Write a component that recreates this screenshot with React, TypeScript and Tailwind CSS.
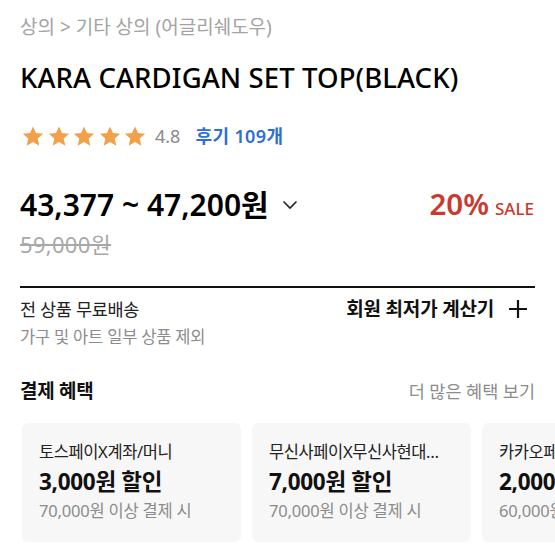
import React from "react";

const Star = () => (
  <svg width="24" height="23" viewBox="0 0 24 24">
    <path
      d="M12 1.5l3.1 6.9 7.5.7-5.7 5.1 1.7 7.5L12 17.8l-6.6 3.9 1.7-7.5-5.7-5.1 7.5-.7z"
      fill="#f3a04a"
    />
  </svg>
);

const cards = [
  { t: "토스페이X계좌/머니", a: "3,000원 할인", c: "70,000원 이상 결제 시" },
  { t: "무신사페이X무신사현대…", a: "7,000원 할인", c: "70,000원 이상 결제 시" },
  { t: "카카오페이X카드", a: "2,000원 할인", c: "60,000원 이상 결제 시" },
];

export default function App() {
  return (
    <div className="w-[555px] h-[555px] overflow-hidden bg-white font-['Noto_Sans','Noto_Sans_CJK_KR',sans-serif]">
      <div className="px-5">
        <div className="pt-[15px] text-[19px] leading-[24px] text-[#a3a3a3] tracking-[0px]">
          상의 &gt; 기타 상의 (어글리쉐도우)
        </div>
        <h1 className="mt-[22px] text-[27.5px] leading-[34px] font-medium text-black tracking-[0.1px]">
          KARA CARDIGAN SET TOP(BLACK)
        </h1>
        <div className="mt-[29px] flex h-[24px] items-center">
          <div className="flex gap-[1.5px] ml-[1px]">
            <Star />
            <Star />
            <Star />
            <Star />
            <Star />
          </div>
          <span className="ml-[8px] text-[18px] text-[#8a8a8a]">4.8</span>
          <span className="ml-[15px] text-[18px] font-semibold text-[#2d6fd2] tracking-[0.4px]">후기 109개</span>
        </div>
        <div className="mt-[37px] flex h-[38px] items-center justify-between">
          <div className="flex items-center">
            <span className="text-[30px] font-semibold text-black tracking-[0px]">43,377 ~ 47,200원</span>
            <svg className="ml-[13px] mt-[2px]" width="16" height="10" viewBox="0 0 16 10">
              <path d="M1.5 1.5L8 8l6.5-6.5" fill="none" stroke="#222" strokeWidth="1.6" />
            </svg>
          </div>
          <div className="flex items-baseline text-[#c9392e]">
            <span className="text-[29.5px] font-semibold">20%</span>
            <span className="ml-[6px] mr-[1px] text-[17px] font-medium">SALE</span>
          </div>
        </div>
        <div className="mt-[8px] text-[22px] leading-[26px] text-[#a8a8a8] tracking-[0.3px] line-through decoration-[#a8a8a8]">
          59,000원
        </div>
        <div className="mt-[29px] h-[2px] bg-[#111]" />
        <div className="mt-[9px] flex items-center justify-between">
          <span className="text-[17.5px] leading-[24px] text-[#222] tracking-[-0.3px]">전 상품 무료배송</span>
          <div className="flex items-center mr-[7px]">
            <span className="text-[19px] leading-[24px] font-bold text-[#111] tracking-[-0.2px]">회원 최저가 계산기</span>
            <svg className="ml-[14px]" width="20" height="20" viewBox="0 0 20 20">
              <path d="M10 1v18M1 10h18" stroke="#111" strokeWidth="2.2" />
            </svg>
          </div>
        </div>
        <div className="mt-[6px] text-[16.5px] leading-[20px] text-[#8c8c8c] tracking-[-0.2px]">
          가구 및 아트 일부 상품 제외
        </div>
        <div className="mt-[32px] flex items-center justify-between">
          <span className="text-[19px] leading-[24px] font-bold text-[#111] tracking-[-0.3px]">결제 혜택</span>
          <span className="text-[17.5px] leading-[24px] text-[#8c8c8c] tracking-[0px]">더 많은 혜택 보기</span>
        </div>
        <div className="mt-[20px] ml-[2px] flex gap-[11px]">
          {cards.map((c) => (
            <div
              key={c.a}
              className="w-[219px] h-[119px] shrink-0 overflow-hidden rounded-[6px] bg-[#f7f7f7] px-[17px] pt-[18px]"
            >
              <div className="text-[16.5px] leading-[22px] text-[#222] tracking-[-0.4px] whitespace-nowrap overflow-hidden">
                {c.t}
              </div>
              <div className="mt-[6px] text-[22.5px] leading-[26px] font-bold text-[#111] tracking-[-0.3px] whitespace-nowrap">
                {c.a}
              </div>
              <div className="mt-[5px] text-[16.5px] leading-[22px] text-[#8c8c8c] tracking-[-0.2px] whitespace-nowrap">
                {c.c}
              </div>
            </div>
          ))}
        </div>
      </div>
    </div>
  );
}
